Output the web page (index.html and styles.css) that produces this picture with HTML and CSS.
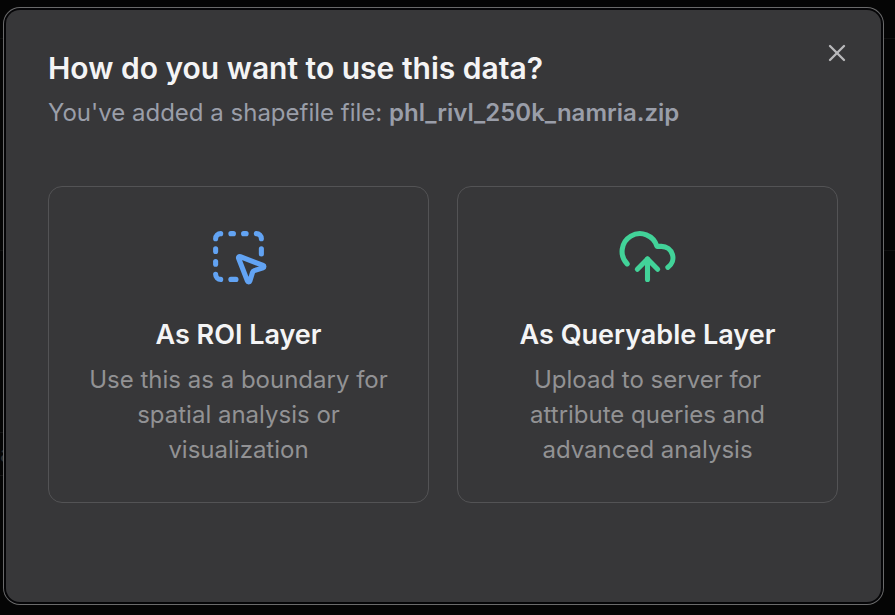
FILE: index.html
```html
<!DOCTYPE html>
<html lang="en">

<head>
    <meta charset="UTF-8" />
    <meta name="viewport" content="width=device-width, initial-scale=1.0" />
    <title>Add data</title>
    <link rel="stylesheet" href="styles.css">
</head>

<body>
    <!-- page behind the dialog -->
    <div class="backdrop">
        <span class="line line-top"></span>
        <span class="line line-middle"></span>
        <span class="field">a</span>
    </div>

    <div class="dialog" role="dialog" aria-labelledby="dialog-title">
        <button class="close" type="button" aria-label="Close">
            <svg viewBox="0 0 24 24">
                <path d="M18 6 6 18" />
                <path d="m6 6 12 12" />
            </svg>
        </button>

        <h2 id="dialog-title" class="title">How do you want to use this data?</h2>
        <p class="subtitle">You've added a shapefile file: <strong>phl_rivl_250k_namria.zip</strong></p>

        <div class="options">
            <button class="option" type="button">
                <svg class="icon icon-roi" viewBox="0 0 24 24">
                    <path d="M12.034 12.681a.498.498 0 0 1 .647-.647l9 3.5a.5.5 0 0 1-.033.943l-3.444 1.068a1 1 0 0 0-.66.66l-1.067 3.443a.5.5 0 0 1-.943.033z" />
                    <path d="M5 3a2 2 0 0 0-2 2" />
                    <path d="M19 3a2 2 0 0 1 2 2" />
                    <path d="M5 21a2 2 0 0 1-2-2" />
                    <path d="M9 3h1" />
                    <path d="M9 21h2" />
                    <path d="M14 3h1" />
                    <path d="M3 9v1" />
                    <path d="M21 9v2" />
                    <path d="M3 14v1" />
                </svg>
                <span class="option-title">As ROI Layer</span>
                <span class="option-text">Use this as a boundary for spatial analysis or visualization</span>
            </button>

            <button class="option" type="button">
                <svg class="icon icon-query" viewBox="0 0 24 24">
                    <path d="M12 13v8" />
                    <path d="M4 14.899A7 7 0 1 1 15.71 8h1.79a4.5 4.5 0 0 1 2.5 8.242" />
                    <path d="m8 17 4-4 4 4" />
                </svg>
                <span class="option-title">As Queryable Layer</span>
                <span class="option-text">Upload to server for attribute queries and advanced analysis</span>
            </button>
        </div>
    </div>
</body>

</html>
```

FILE: styles.css
```css
* {
    margin: 0;
    padding: 0;
    box-sizing: border-box;
}

body {
    min-height: 100vh;
    display: flex;
    padding: 10px 14px 13px 6px;
    background-color: #050505;
    font-family: Inter, "Liberation Sans", sans-serif;
}

.backdrop {
    position: absolute;
    inset: 0;
    overflow: hidden;
}

.line {
    position: absolute;
    left: 0;
    right: 0;
    height: 1px;
    background-color: #101010;
}

.line-top {
    top: 38px;
}

.line-middle {
    top: 250px;
}

.field {
    position: absolute;
    top: 432px;
    left: 0;
    width: 50%;
    border-top: 1px solid #141414;
    border-bottom: 1px solid #141414;
    color: #303030;
    font-size: 24px;
    line-height: 42px;
}

.dialog {
    position: relative;
    flex: 1;
    padding: 38px 43px 40px 42px;
    border-radius: 14px;
    background-color: #373739;
    box-shadow: 0 0 0 2px #050507, 0 0 0 3px #6a6a6b;
}

.close {
    position: absolute;
    top: 29px;
    right: 30px;
    width: 28px;
    height: 28px;
    border: 0;
    background: none;
    color: #b9b9bb;
    cursor: pointer;
}

.close svg {
    width: 28px;
    height: 28px;
}

svg {
    display: block;
    fill: none;
    stroke: currentColor;
    stroke-width: 2;
    stroke-linecap: round;
    stroke-linejoin: round;
}

.title {
    color: #f4f4f5;
    font-size: 30px;
    font-weight: 600;
    line-height: 40px;
}

.subtitle {
    margin-top: 7px;
    color: #9a9ea9;
    font-size: 24px;
    line-height: 36px;
}

.subtitle strong {
    font-weight: 600;
}

.options {
    display: grid;
    grid-template-columns: 1fr 1fr;
    gap: 28px;
    margin-top: 55px;
}

.option {
    display: flex;
    flex-direction: column;
    align-items: center;
    padding: 39px 36px 35px;
    border: 1px solid #535355;
    border-radius: 14px;
    background: none;
    font-family: inherit;
    text-align: center;
    cursor: pointer;
}

.icon {
    width: 61px;
    height: 61px;
}

.icon-roi {
    color: #62a3f3;
}

.icon-query {
    color: #42d399;
}

.option-title {
    margin-top: 28px;
    color: #f4f4f5;
    font-size: 27px;
    font-weight: 600;
    line-height: 40px;
}

.option-text {
    margin-top: 7px;
    color: #929294;
    font-size: 24px;
    line-height: 35px;
}
```
